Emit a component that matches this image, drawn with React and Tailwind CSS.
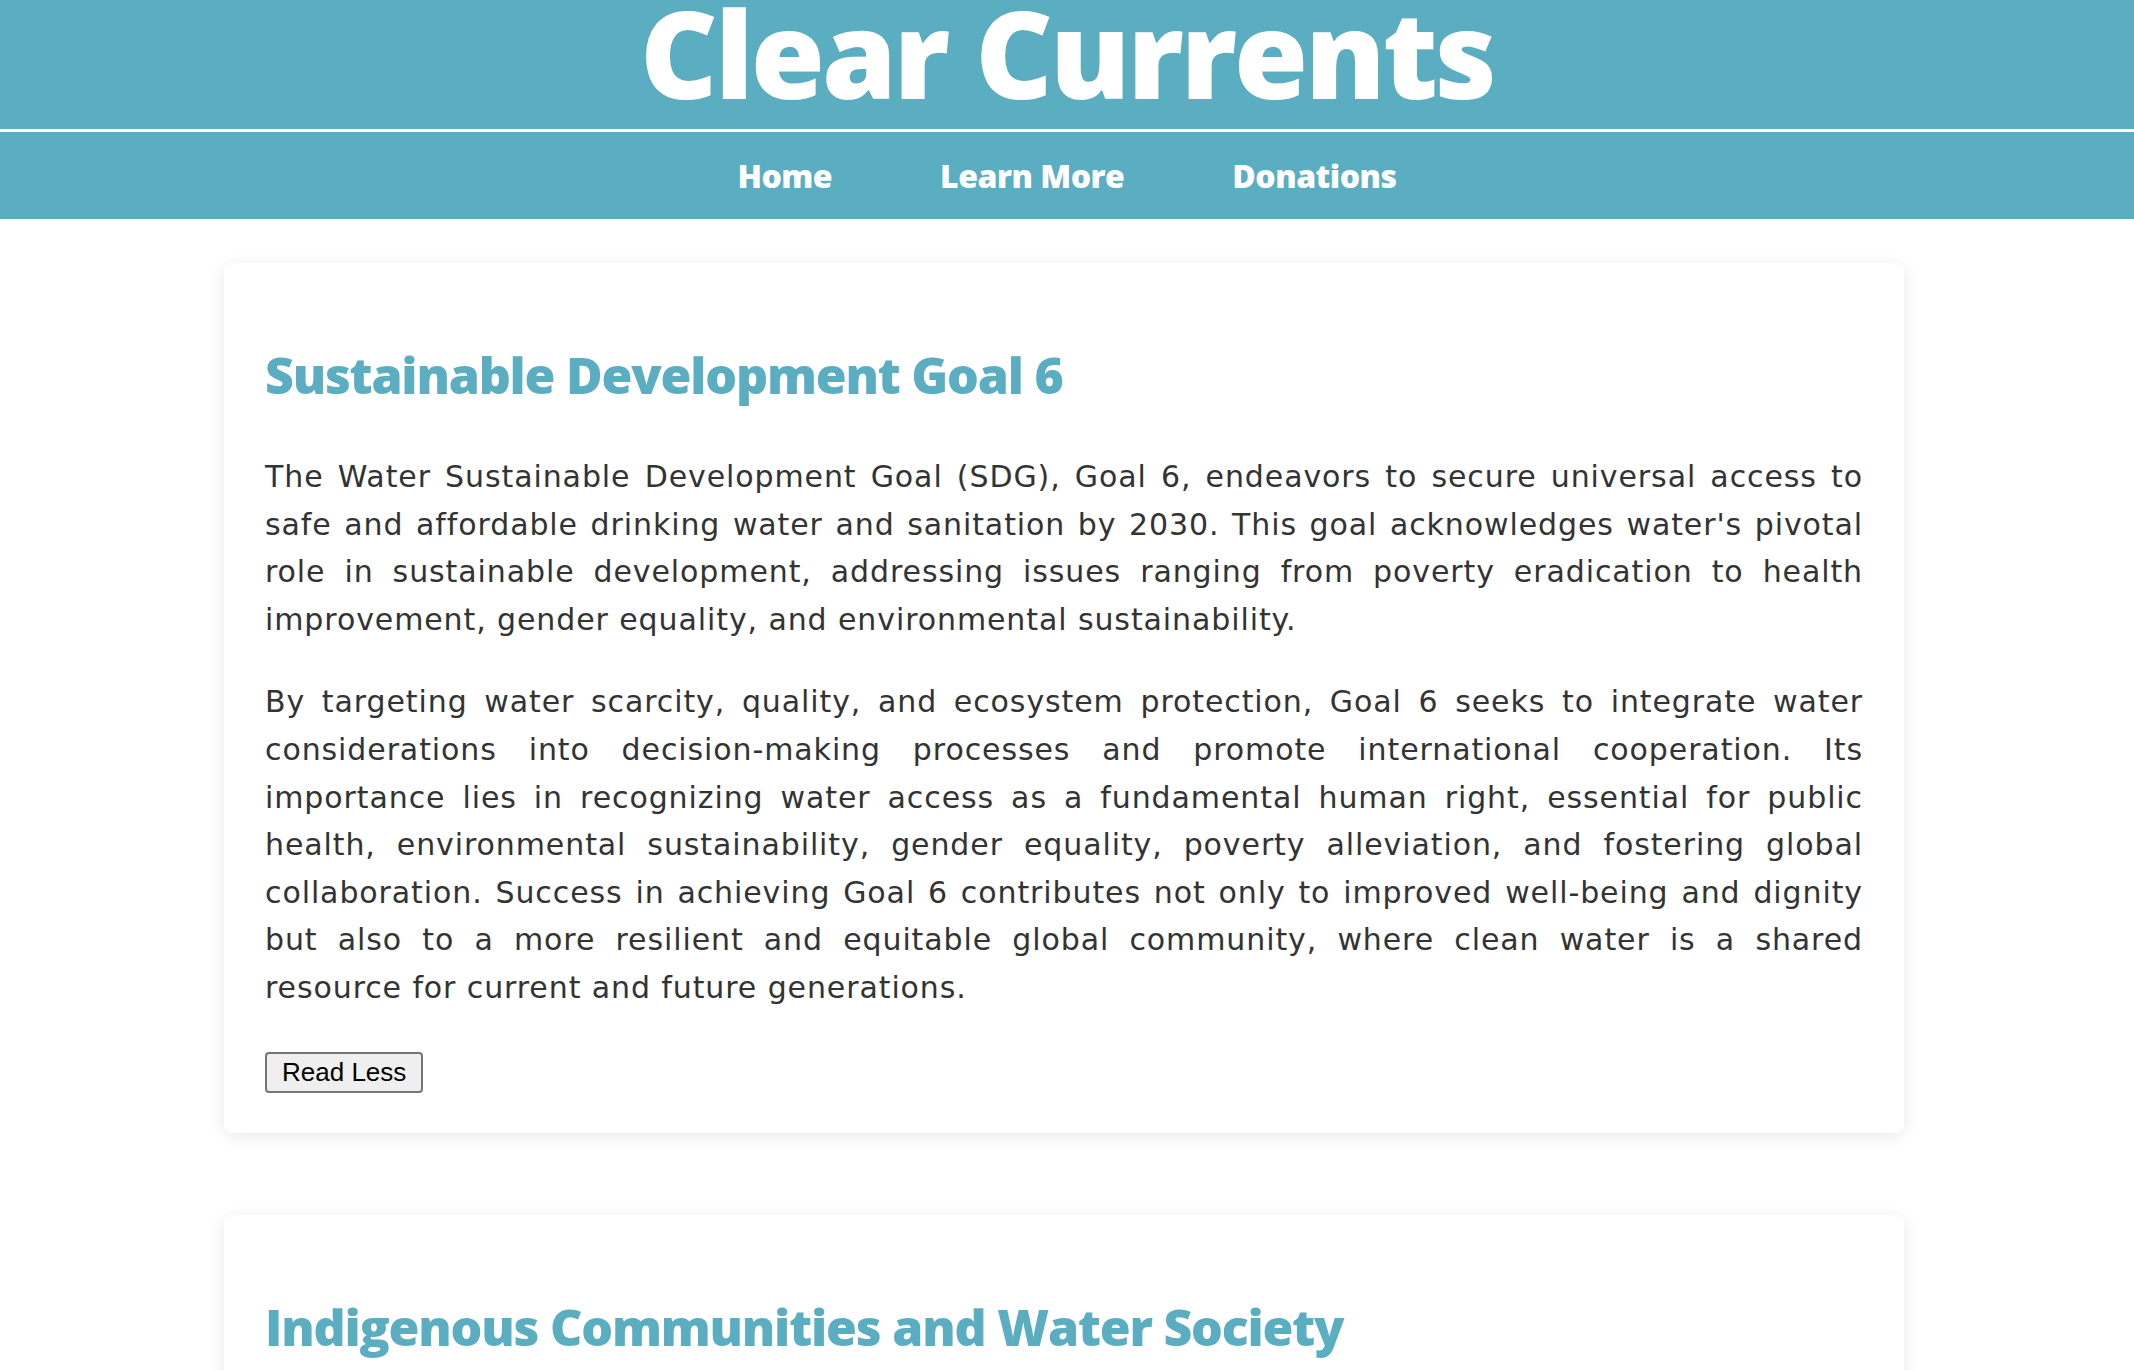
import React, { useState } from 'react';

const sections = [
  {
    title: 'Sustainable Development Goal 6',
    paragraphs: [
      "The Water Sustainable Development Goal (SDG), Goal 6, endeavors to secure universal access to safe and affordable drinking water and sanitation by 2030. This goal acknowledges water's pivotal role in sustainable development, addressing issues ranging from poverty eradication to health improvement, gender equality, and environmental sustainability.",
      'By targeting water scarcity, quality, and ecosystem protection, Goal 6 seeks to integrate water considerations into decision-making processes and promote international cooperation. Its importance lies in recognizing water access as a fundamental human right, essential for public health, environmental sustainability, gender equality, poverty alleviation, and fostering global collaboration. Success in achieving Goal 6 contributes not only to improved well-being and dignity but also to a more resilient and equitable global community, where clean water is a shared resource for current and future generations.',
    ],
    open: true,
  },
  {
    title: 'Indigenous Communities and Water Society',
    paragraphs: [
      'Indigenous communities have long held a deep relationship with water, treating it as a living relative rather than a resource. Many of these communities still face unsafe drinking water and long-term advisories, even in wealthy nations.',
    ],
    open: false,
  },
];

function Card({ section }) {
  const [open, setOpen] = useState(section.open);
  const shown = open ? section.paragraphs : section.paragraphs.slice(0, 1);

  return (
    <article className="w-[1680px] rounded-lg bg-white px-[41px] pt-[78px] pb-[40px] shadow-[0_3px_16px_rgba(0,0,0,0.09)]">
      <h2 className="text-[50px] leading-[68px] font-extrabold tracking-[-1.2px] text-[#5badc1]">
        {section.title}
      </h2>
      <div className="mt-[44px] flex flex-col gap-[35px] font-['DejaVu_Sans',sans-serif] text-[30px] leading-[47.6px] tracking-[0.9px] text-[#333333] text-justify">
        {shown.map((p, i) => (
          <p key={i}>{p}</p>
        ))}
      </div>
      <button
        onClick={() => setOpen(!open)}
        className="mt-[40px] rounded-[4px] border-2 border-[#767676] bg-[#efefef] px-[15px] py-[3.5px] font-['Liberation_Sans',Arial,sans-serif] text-[26px] leading-[30px] text-black"
      >
        {open ? 'Read Less' : 'Read More'}
      </button>
    </article>
  );
}

export default function App() {
  return (
    <div className="min-h-screen bg-white font-['Open_Sans',sans-serif]">
      <header className="bg-[#5badc1]">
        <div className="h-[129px] text-center">
          <h1 className="text-[120px] leading-[106px] font-extrabold tracking-[-3px] text-white">Clear Currents</h1>
        </div>
        <div className="h-[3px] bg-white"></div>
        <nav className="flex h-[87px] items-center justify-center gap-[108px] text-[32px] font-extrabold tracking-[-0.5px] text-white">
          <a href="#">Home</a>
          <a href="#">Learn More</a>
          <a href="#">Donations</a>
        </nav>
      </header>

      <main className="flex flex-col items-center gap-[82px] pt-[44px] pr-[6px] pb-[80px]">
        {sections.map((s) => (
          <Card key={s.title} section={s} />
        ))}
      </main>
    </div>
  );
}
